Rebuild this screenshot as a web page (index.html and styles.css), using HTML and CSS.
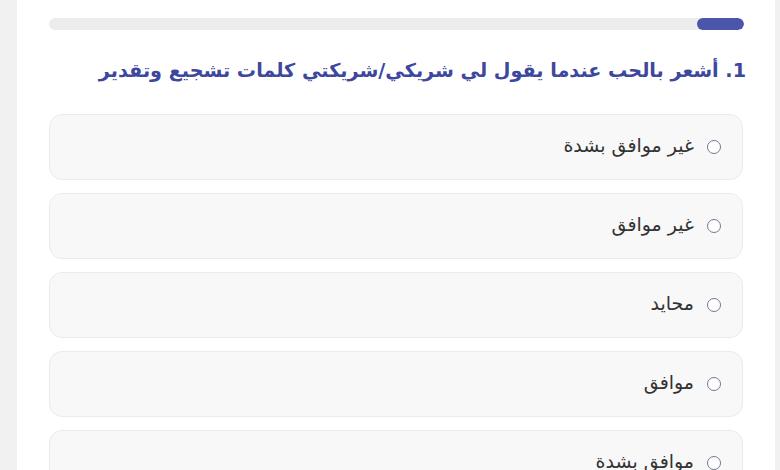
FILE: index.html
```html
<!DOCTYPE html>
<html lang="ar" dir="rtl">
<head>
  <meta charset="UTF-8" />
  <meta name="viewport" content="width=device-width, initial-scale=1" />
  <title>استبيان</title>
  <link rel="stylesheet" href="styles.css">
</head>
<body>
  <div class="card">
    <div class="progress">
      <div class="progress-fill" style="width: 47px;"></div>
    </div>

    <h2 class="question">1. أشعر بالحب عندما يقول لي شريكي/شريكتي كلمات تشجيع وتقدير</h2>

    <div class="options">
      <label class="option"><input type="radio" name="q1" /> <span>غير موافق بشدة</span></label>
      <label class="option"><input type="radio" name="q1" /> <span>غير موافق</span></label>
      <label class="option"><input type="radio" name="q1" /> <span>محايد</span></label>
      <label class="option"><input type="radio" name="q1" /> <span>موافق</span></label>
      <label class="option"><input type="radio" name="q1" /> <span>موافق بشدة</span></label>
    </div>
  </div>
</body>
</html>
```

FILE: styles.css
```css
body {
  margin: 0;
  background: #f1f1f1;
  font-family: "DejaVu Sans", sans-serif;
  overflow: hidden;
}
.card {
  background: #fff;
  margin: 0 5px 0 17px;
  padding: 18px 31px 20px 32px;
  height: 470px;
  box-sizing: border-box;
  overflow: hidden;
}
.progress {
  height: 12px;
  background: #ececec;
  border-radius: 6px;
  overflow: hidden;
}
.progress-fill {
  height: 100%;
  background: #4b55aa;
  border-radius: 6px;
}
.question {
  margin: 26px -2px 0 0;
  font-size: 19.2px;
  font-weight: bold;
  color: #3d479e;
  line-height: 30px;
}
.options {
  margin-top: 28px;
  display: flex;
  flex-direction: column;
  gap: 13px;
}
.option {
  display: flex;
  align-items: center;
  gap: 13px;
  height: 66px;
  flex-shrink: 0;
  box-sizing: border-box;
  padding: 0 21px 4px 20px;
  margin-right: 1px;
  background: #f8f8f8;
  border: 1px solid #ebebeb;
  border-radius: 13px;
  font-size: 19px;
  line-height: 24px;
  color: #333;
}
.option input {
  appearance: none;
  width: 14px;
  height: 14px;
  margin: 3px 0 0 0;
  border: 1.5px solid #737895;
  border-radius: 50%;
  background: #fff;
}
```
